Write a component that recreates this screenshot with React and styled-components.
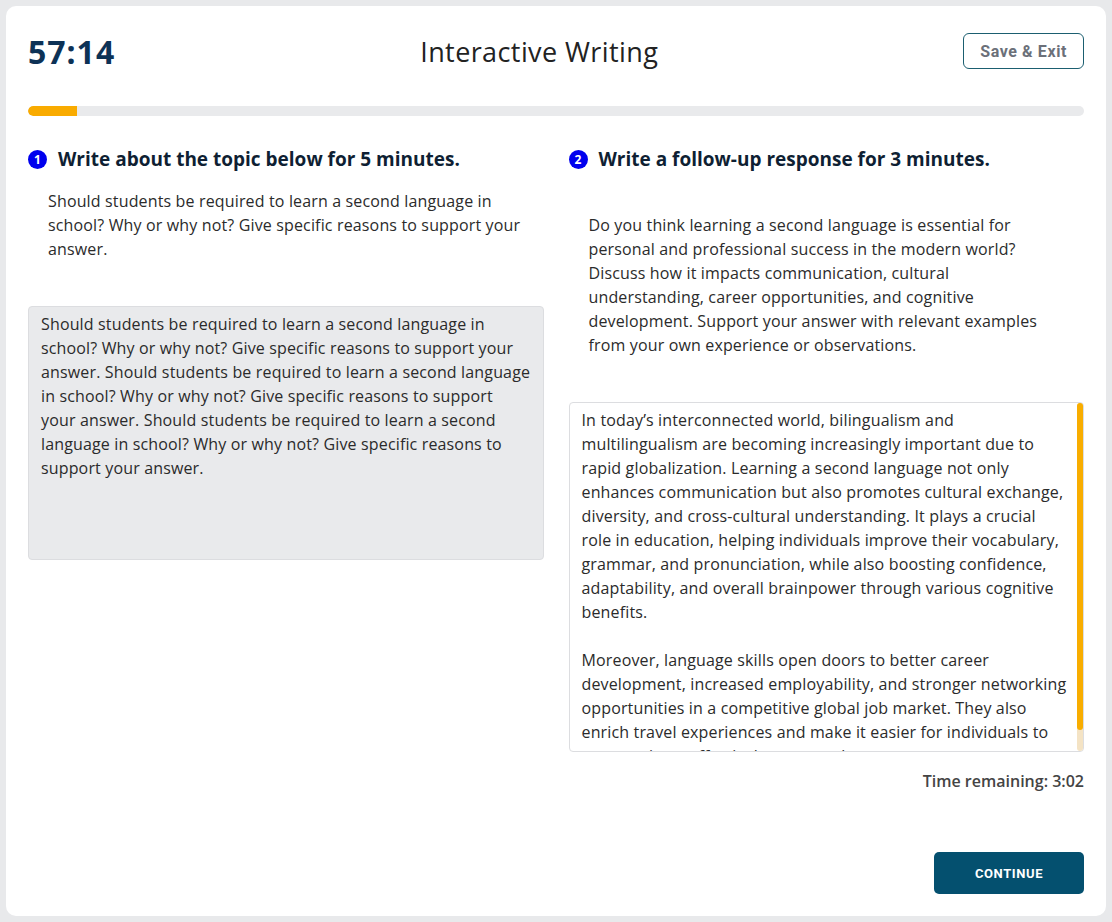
import React from "react";
import styled, { createGlobalStyle } from "styled-components";

const GlobalStyle = createGlobalStyle`
  html, body {
    margin: 0;
    padding: 0;
    background: #e8e9eb;
    font-family: "Open Sans", "Noto Sans", sans-serif;
  }
  * { box-sizing: border-box; }
`;

const firstPrompt =
  "Should students be required to learn a second language in school? Why or why not? Give specific reasons to support your answer.";

const followPrompt =
  "Do you think learning a second language is essential for personal and professional success in the modern world? Discuss how it impacts communication, cultural understanding, career opportunities, and cognitive development. Support your answer with relevant examples from your own experience or observations.";

const firstAnswer = [firstPrompt, firstPrompt, firstPrompt].join(" ");

const followAnswer =
  "In today\u2019s interconnected world, bilingualism and multilingualism are becoming increasingly important due to rapid globalization. Learning a second language not only enhances communication but also promotes cultural exchange, diversity, and cross-cultural understanding. It plays a crucial role in education, helping individuals improve their vocabulary, grammar, and pronunciation, while also boosting confidence, adaptability, and overall brainpower through various cognitive benefits.\n\nMoreover, language skills open doors to better career development, increased employability, and stronger networking opportunities in a competitive global job market. They also enrich travel experiences and make it easier for individuals to communicate effectively across cultures.";

const App = () => {
  return (
    <>
      <GlobalStyle />
      <Page>
        <Card>
          <Header>
            <Timer>57:14</Timer>
            <Title>Interactive Writing</Title>
            <SaveButton>Save &amp; Exit</SaveButton>
          </Header>
          <Progress>
            <ProgressFill style={{ width: "4.6%" }} />
          </Progress>
          <Columns>
            <Column>
              <StepHeading>
                <StepNumber>1</StepNumber>
                Write about the topic below for 5 minutes.
              </StepHeading>
              <Prompt>{firstPrompt}</Prompt>
              <AnswerBox readOnly disabled value={firstAnswer} $height={254} />
            </Column>
            <Column>
              <StepHeading>
                <StepNumber>2</StepNumber>
                Write a follow-up response for 3 minutes.
              </StepHeading>
              <Prompt $offset>{followPrompt}</Prompt>
              <EditorWrap>
                <AnswerBox defaultValue={followAnswer} $height={350} $active />
                <ScrollTrack>
                  <ScrollThumb style={{ height: "94%" }} />
                </ScrollTrack>
              </EditorWrap>
              <TimeLeft>Time remaining: 3:02</TimeLeft>
            </Column>
          </Columns>
          <Footer>
            <ContinueButton>CONTINUE</ContinueButton>
          </Footer>
        </Card>
      </Page>
    </>
  );
};

const Page = styled.div`
  padding: 6px;
  height: 922px;
`;

const Card = styled.div`
  background: #ffffff;
  border-radius: 10px;
  height: 910px;
  padding: 22px 22px 0 22px;
  display: flex;
  flex-direction: column;
`;

const Header = styled.div`
  display: flex;
  justify-content: space-between;
  align-items: center;
  height: 46px;
`;

const Timer = styled.div`
  font-family: "Noto Sans", sans-serif;
  font-size: 32px;
  font-weight: 700;
  color: #0d3256;
  letter-spacing: 1px;
`;

const Title = styled.h1`
  margin: 0;
  font-size: 27px;
  font-weight: 400;
  letter-spacing: 0.4px;
  color: #222;
`;

const SaveButton = styled.button`
  height: 36px;
  padding: 0 16px;
  background: #fff;
  border: 1px solid #1b5e70;
  border-radius: 6px;
  font-family: Roboto, sans-serif;
  font-weight: 700;
  font-size: 16px;
  letter-spacing: 0.6px;
  color: #6b7079;
`;

const Progress = styled.div`
  margin-top: 32px;
  height: 10px;
  border-radius: 5px;
  background: #e9eaec;
  overflow: hidden;
`;

const ProgressFill = styled.div`
  height: 100%;
  background: #f9ab00;
  border-radius: 5px 0 0 5px;
`;

const Columns = styled.div`
  display: grid;
  grid-template-columns: 1fr 1fr;
  column-gap: 25px;
  margin-top: 30px;
`;

const Column = styled.div`
  display: flex;
  flex-direction: column;
`;

const StepHeading = styled.h2`
  margin: 0;
  display: flex;
  align-items: center;
  gap: 11px;
  font-size: 19px;
  font-weight: 700;
  color: #0f1f33;
  height: 26px;
`;

const StepNumber = styled.span`
  width: 19px;
  height: 19px;
  border-radius: 50%;
  background: #0000ee;
  color: #fff;
  font-size: 12px;
  font-weight: 700;
  display: inline-flex;
  align-items: center;
  justify-content: center;
  flex: none;
`;

const Prompt = styled.p`
  margin: ${(p) => (p.$offset ? "41px" : "17px")} 0 0 0;
  padding: 0 20px;
  font-size: 16px;
  line-height: 24px;
  letter-spacing: 0.15px;
  color: #2b2b2b;
  min-height: ${(p) => (p.$offset ? "0" : "117px")};
`;

const EditorWrap = styled.div`
  position: relative;
  margin-top: 45px;
  display: flex;
`;

const AnswerBox = styled.textarea`
  display: block;
  height: ${(p) => p.$height}px;
  width: 100%;
  resize: none;
  padding: 5px ${(p) => (p.$active ? "15px" : "12px")} 5px 12px;
  font-family: inherit;
  font-size: 16px;
  line-height: 24px;
  letter-spacing: 0.15px;
  color: #2b2b2b;
  background: ${(p) => (p.$active ? "#ffffff" : "#e9eaec")};
  border: 1px solid #dcdde0;
  border-radius: 4px;
  outline: none;
  opacity: 1;
  -webkit-text-fill-color: #2b2b2b;
  overflow: hidden;
  scrollbar-width: none;
`;

const ScrollTrack = styled.div`
  position: absolute;
  top: 1px;
  right: 1px;
  bottom: 1px;
  width: 6px;
  border-radius: 3px;
  background: #f4e3c4;
`;

const ScrollThumb = styled.div`
  width: 100%;
  border-radius: 3px;
  background: #f8ad00;
`;

const TimeLeft = styled.div`
  margin-top: 18px;
  text-align: right;
  font-size: 16px;
  font-weight: 600;
  color: #444;
`;

const Footer = styled.div`
  margin-top: auto;
  display: flex;
  justify-content: flex-end;
  padding-bottom: 22px;
`;

const ContinueButton = styled.button`
  width: 150px;
  height: 42px;
  border: none;
  border-radius: 5px;
  background: #04506f;
  color: #fff;
  font-family: Roboto, sans-serif;
  font-weight: 700;
  font-size: 13px;
  letter-spacing: 0.6px;
`;

export default App;
